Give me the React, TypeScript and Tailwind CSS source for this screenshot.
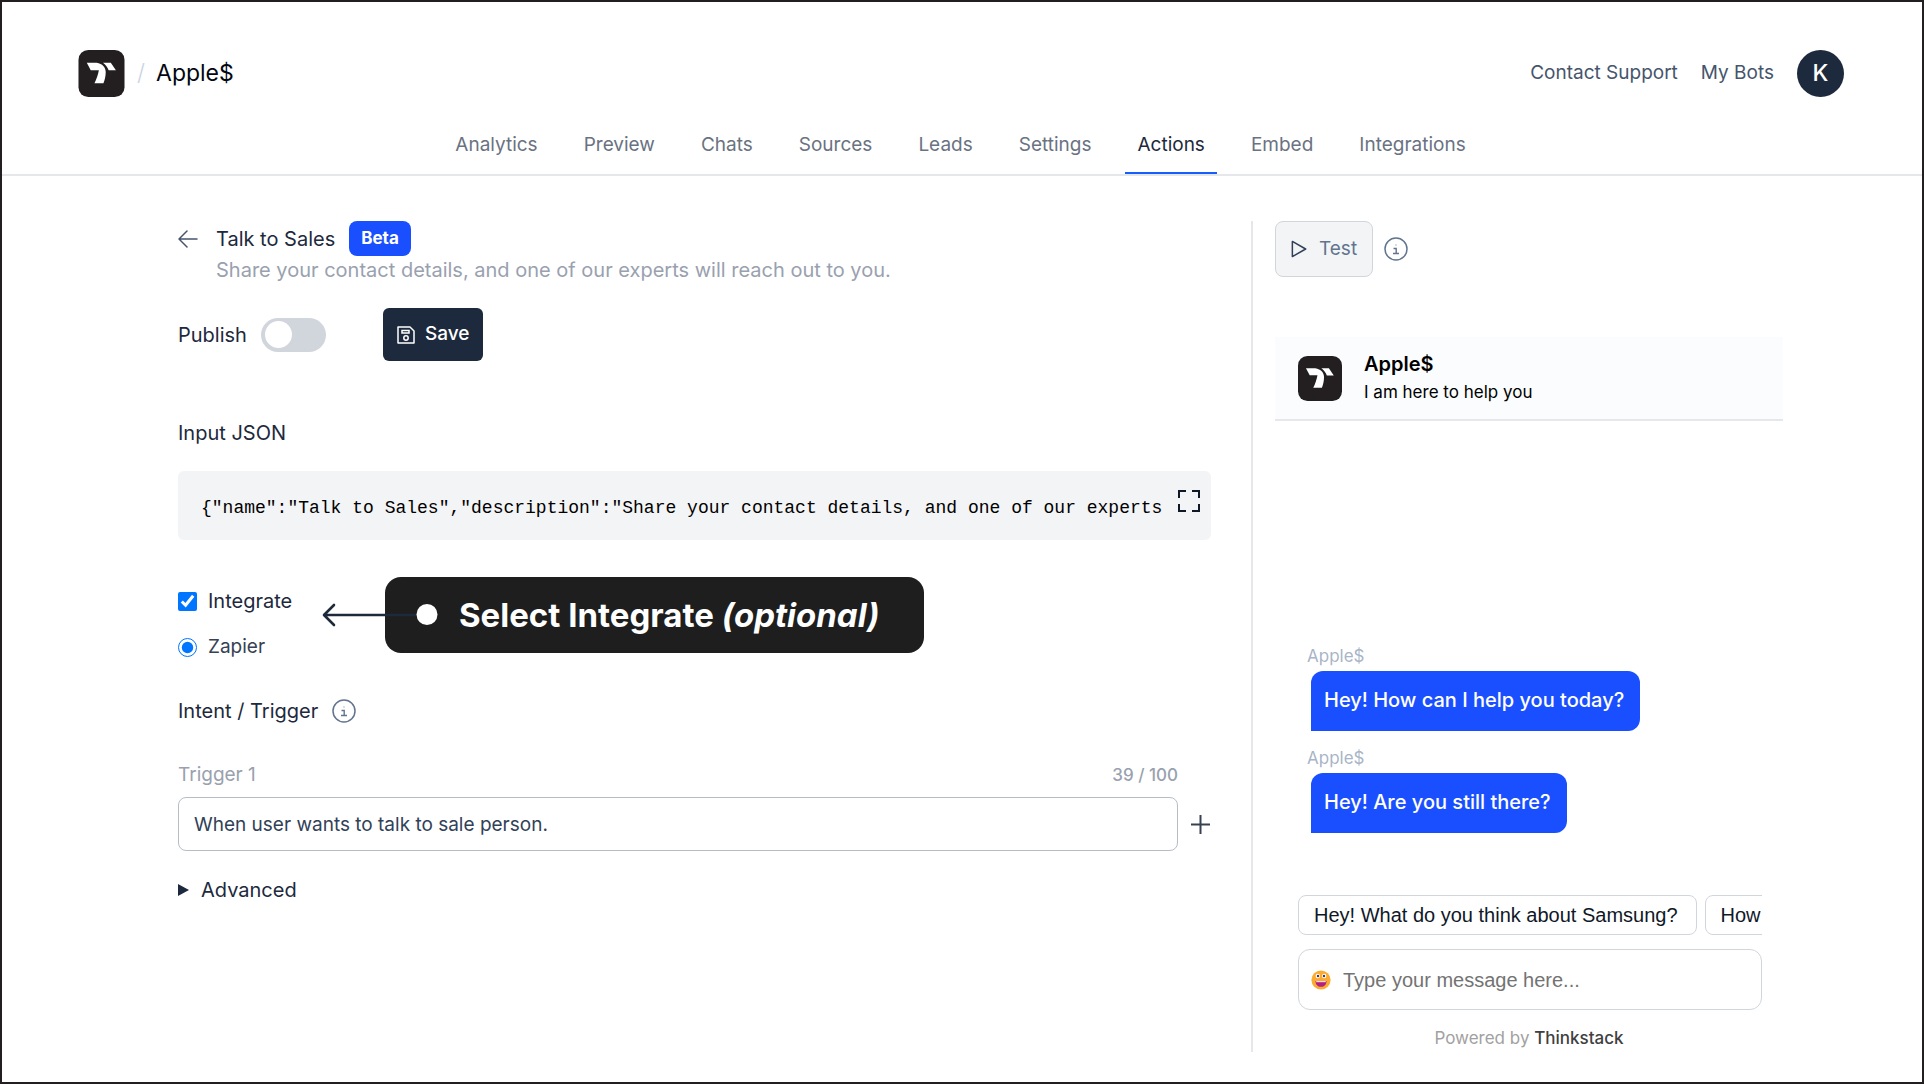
import { useState } from "react";

const tabs = ["Analytics", "Preview", "Chats", "Sources", "Leads", "Settings", "Actions", "Embed", "Integrations"];
const messages = ["Hey! How can I help you today?", "Hey! Are you still there?"];
const suggestions = ["Hey! What do you think about Samsung?", "How can I use this?"];
const inputJson =
  '{"name":"Talk to Sales","description":"Share your contact details, and one of our experts will reach out to you."}';

function Logo({ className }: { className: string }) {
  return (
    <svg viewBox="0 0 47 48" className={className} aria-hidden="true">
      <rect width="47" height="48" rx="10" fill="#231f20" />
      <path d="M8.5 13H18.5C24.5 14 27.8 17.5 27.8 22.5C27.8 26.5 27 30.5 25.5 34H16.3C18.5 29.5 20 25 20.8 20.6H12.5Z" fill="#fff" />
      <path d="M25 13H33L38.2 20.8H30.8C29.6 17.5 27.6 15 25 13Z" fill="#fff" />
    </svg>
  );
}

function InfoIcon() {
  return (
    <svg viewBox="0 0 24 24" className="size-6 shrink-0 text-slate-500" fill="none" stroke="currentColor" aria-hidden="true">
      <circle cx="12" cy="12" r="11" strokeWidth="1.5" />
      <path d="M9.5 11.5H12.2V16.5M9 16.5H15" strokeWidth="1.4" />
      <circle cx="12" cy="8" r="0.4" strokeWidth="0.4" />
    </svg>
  );
}

function Emoji() {
  return (
    <svg viewBox="0 0 20 20" className="size-5 shrink-0" aria-hidden="true">
      <circle cx="10" cy="10" r="9.6" fill="#fcab32" />
      <circle cx="6.8" cy="6" r="2.2" fill="#fff" />
      <circle cx="13.2" cy="6" r="2.2" fill="#fff" />
      <circle cx="7" cy="6" r="1.2" fill="#3b3b4f" />
      <circle cx="13" cy="6" r="1.2" fill="#3b3b4f" />
      <path d="M4.5 11H15.5C15.5 14.7 13.2 16.8 10 16.8S4.5 14.7 4.5 11Z" fill="#b3207f" />
      <path d="M5.2 11H14.8V12.2H5.2Z" fill="#f7d9ea" />
    </svg>
  );
}

function Callout() {
  return (
    <div className="absolute top-[-10px] left-[144px] flex items-center">
      <div className="ml-[63px] flex h-[76px] w-[539px] items-center rounded-2xl bg-[#1e1e1e] pl-[74px] text-[33px] font-bold whitespace-nowrap text-white">
        <span>
          Select Integrate <em>(optional)</em>
        </span>
      </div>
      <svg viewBox="0 0 118 26" className="absolute left-0 h-[26px] w-[118px]" fill="none" aria-hidden="true">
        <path d="M3 13H97M12 3L2 13L12 23" stroke="#1e293b" strokeWidth="2.6" strokeLinecap="round" strokeLinejoin="round" />
        <circle cx="105" cy="12.5" r="10.5" fill="#fff" />
      </svg>
    </div>
  );
}

function Header() {
  return (
    <header className="border-b-2 border-gray-200">
      <div className="flex items-center justify-between pt-12 pr-[78px] pl-[76px]">
        <div className="flex items-center">
          <Logo className="h-[47px] w-[47px]" />
          <span className="ml-3 text-[23px] font-light text-slate-300">/</span>
          <span className="ml-[11px] text-[23px] text-gray-950">Apple$</span>
        </div>
        <div className="flex items-center gap-[23px] text-[19px] text-slate-600">
          <a href="#support">Contact Support</a>
          <a href="#bots">My Bots</a>
          <button type="button" className="size-[47px] rounded-full bg-slate-800 text-[23px] font-medium text-white">
            K
          </button>
        </div>
      </div>
      <nav className="mt-[29px] flex justify-center gap-[22px] pr-[3px] text-[19px] text-gray-500">
        {tabs.map((tab) => (
          <a
            key={tab}
            href={"#" + tab.toLowerCase()}
            className={
              tab === "Actions"
                ? "h-[48px] border-b-2 border-blue-600 px-3 leading-[38px] text-slate-800"
                : "h-[48px] px-3 leading-[38px]"
            }
          >
            {tab}
          </a>
        ))}
      </nav>
    </header>
  );
}

function ActionForm() {
  const [publish, setPublish] = useState(false);
  const [integrate, setIntegrate] = useState(true);
  const [trigger, setTrigger] = useState("When user wants to talk to sale person.");
  return (
    <main className="min-w-0 flex-1 pr-10 text-xl text-slate-800">
      <div className="flex h-[35px] items-center">
        <button type="button" aria-label="Back" className="mr-[18px] text-slate-600">
          <svg viewBox="0 0 20 18" className="h-[18px] w-5" fill="none" stroke="currentColor" strokeWidth="1.5" strokeLinecap="round" strokeLinejoin="round">
            <path d="M19 9H1M9 1L1 9L9 17" />
          </svg>
        </button>
        <h1>Talk to Sales</h1>
        <span className="ml-[14px] flex h-[35px] items-center rounded-lg bg-[#1a4fff] px-3 text-[17px] font-bold text-white">Beta</span>
      </div>
      <p className="pl-[38px] leading-7 text-gray-400">Share your contact details, and one of our experts will reach out to you.</p>

      <div className="mt-6 flex items-center">
        <label className="flex items-center gap-[14px]">
          <span>Publish</span>
          <input type="checkbox" role="switch" className="peer sr-only" checked={publish} onChange={(e) => setPublish(e.target.checked)} />
          <span className="flex h-[34px] w-[65px] items-center rounded-full bg-gray-300 px-1 peer-checked:justify-end peer-checked:bg-blue-600">
            <span className="size-[27px] rounded-full bg-white" />
          </span>
        </label>
        <button type="button" className="ml-[57px] flex h-[53px] items-center gap-[10px] rounded-md bg-slate-800 px-[14px] text-[19px] font-medium text-white">
          <svg viewBox="0 0 18 18" className="size-[18px]" fill="none" stroke="currentColor" strokeWidth="1.5" aria-hidden="true">
            <path d="M1 1H13L17 5V17H1Z" strokeLinejoin="round" />
            <path d="M5 4.5H12V7H5Z" />
            <circle cx="9" cy="12" r="2.2" />
          </svg>
          Save
        </button>
      </div>

      <h2 className="mt-[58px] leading-7">Input JSON</h2>
      <div className="mt-6 flex h-[69px] rounded-md bg-gray-100 pr-[11px] pl-[23px]">
        <code className="min-w-0 flex-1 overflow-hidden font-['Liberation_Mono',monospace] text-lg leading-[74px] whitespace-nowrap text-black">
          {inputJson}
        </code>
        <button type="button" aria-label="Expand" className="mt-[19px] ml-[11px] size-[22px] text-gray-900">
          <svg viewBox="0 0 22 22" fill="none" stroke="currentColor" strokeWidth="2" aria-hidden="true">
            <path d="M1 8V1H8M14 1H21V8M21 14V21H14M8 21H1V14" />
          </svg>
        </button>
      </div>

      <div className="relative mt-[47px]">
        <div className="flex flex-col gap-[18px]">
          <label className="flex h-7 items-center gap-[11px]">
            <input type="checkbox" className="size-[19px] accent-[#0075ff]" checked={integrate} onChange={(e) => setIntegrate(e.target.checked)} />
            Integrate
          </label>
          <label className="flex h-7 items-center gap-[11px] text-[19px] text-gray-700">
            <input type="radio" name="provider" className="size-[19px] accent-[#0075ff]" defaultChecked />
            Zapier
          </label>
        </div>
        <Callout />
      </div>

      <div className="mt-9 flex h-7 items-center gap-[14px]">
        <h2>Intent / Trigger</h2>
        <InfoIcon />
      </div>

      <div className="mt-9 mr-[33px] flex justify-between leading-7 text-gray-400">
        <label htmlFor="trigger-1" className="text-[19px]">
          Trigger 1
        </label>
        <span className="text-[17px] font-medium">39 / 100</span>
      </div>
      <div className="mt-2 flex items-center gap-3">
        <input
          id="trigger-1"
          type="text"
          value={trigger}
          onChange={(e) => setTrigger(e.target.value)}
          className="h-[54px] min-w-0 flex-1 rounded-lg border border-gray-400/70 px-[15px] text-[19px] text-slate-700 outline-none"
        />
        <button type="button" aria-label="Add trigger" className="text-gray-700">
          <svg viewBox="0 0 21 21" className="size-[21px]" stroke="currentColor" strokeWidth="2">
            <path d="M10.5 1V20M1 10.5H20" />
          </svg>
        </button>
      </div>

      <button type="button" className="mt-[25px] flex h-7 items-center gap-3">
        <svg viewBox="0 0 11 12" className="h-3 w-[11px]" fill="currentColor" aria-hidden="true">
          <path d="M0 0L11 6L0 12Z" />
        </svg>
        Advanced
      </button>
    </main>
  );
}

function ChatPanel() {
  return (
    <aside className="flex w-[532px] shrink-0 flex-col border-l-2 border-gray-200 pl-[22px]">
      <div className="flex items-center gap-[11px]">
        <button type="button" className="flex h-14 items-center gap-3 rounded-lg border border-gray-300 bg-gray-100 px-[15px] text-[19px] text-slate-500">
          <svg viewBox="0 0 16 19" className="h-[18px] w-4 text-slate-700" fill="none" stroke="currentColor" strokeWidth="1.6" strokeLinejoin="round" aria-hidden="true">
            <path d="M1 1.5L15 9.5L1 17.5Z" />
          </svg>
          Test
        </button>
        <InfoIcon />
      </div>

      <div className="mt-[60px] flex h-[84px] items-center gap-[22px] border-b-2 border-gray-200 bg-[#fbfcfe] px-[23px]">
        <Logo className="h-[45px] w-11" />
        <div className="text-black">
          <h2 className="text-xl leading-7 font-semibold">Apple$</h2>
          <p className="text-[17px] leading-7">I am here to help you</p>
        </div>
      </div>

      <div className="mt-[222px] pl-8 text-[17px]">
        {messages.map((text) => (
          <div key={text} className="mb-[14px]">
            <p className="mb-[2px] leading-[26px] text-slate-400/80">Apple$</p>
            <p className="ml-1 flex h-[60px] w-fit items-center rounded-xl rounded-bl-none bg-[#1a4fff] pr-4 pb-[2px] pl-[13px] text-xl font-medium text-white">{text}</p>
          </div>
        ))}
      </div>

      <div className="mt-12 mr-[21px] ml-[23px] font-['Liberation_Sans',sans-serif] text-xl">
        <div className="flex gap-2 overflow-hidden">
          {suggestions.map((text) => (
            <button key={text} type="button" className="h-10 shrink-0 rounded-lg border border-gray-300 pr-[18px] pl-[15px] text-gray-900">
              {text}
            </button>
          ))}
        </div>
        <label className="mt-[14px] flex h-[61px] items-center gap-3 rounded-xl border border-gray-300 px-3">
          <Emoji />
          <input type="text" aria-label="Message" placeholder="Type your message here..." className="min-w-0 flex-1 outline-none placeholder:text-neutral-500" />
        </label>
      </div>
      <p className="mt-[14px] text-center text-[17px] leading-7 text-neutral-400">
        Powered by <span className="font-medium text-neutral-700">Thinkstack</span>
      </p>
    </aside>
  );
}

export default function App() {
  return (
    <div className="min-h-screen border-2 border-[#231f20] bg-white font-['Inter',sans-serif]">
      <Header />
      <div className="flex pt-[45px] pr-[139px] pb-[30px] pl-[176px]">
        <ActionForm />
        <ChatPanel />
      </div>
    </div>
  );
}
